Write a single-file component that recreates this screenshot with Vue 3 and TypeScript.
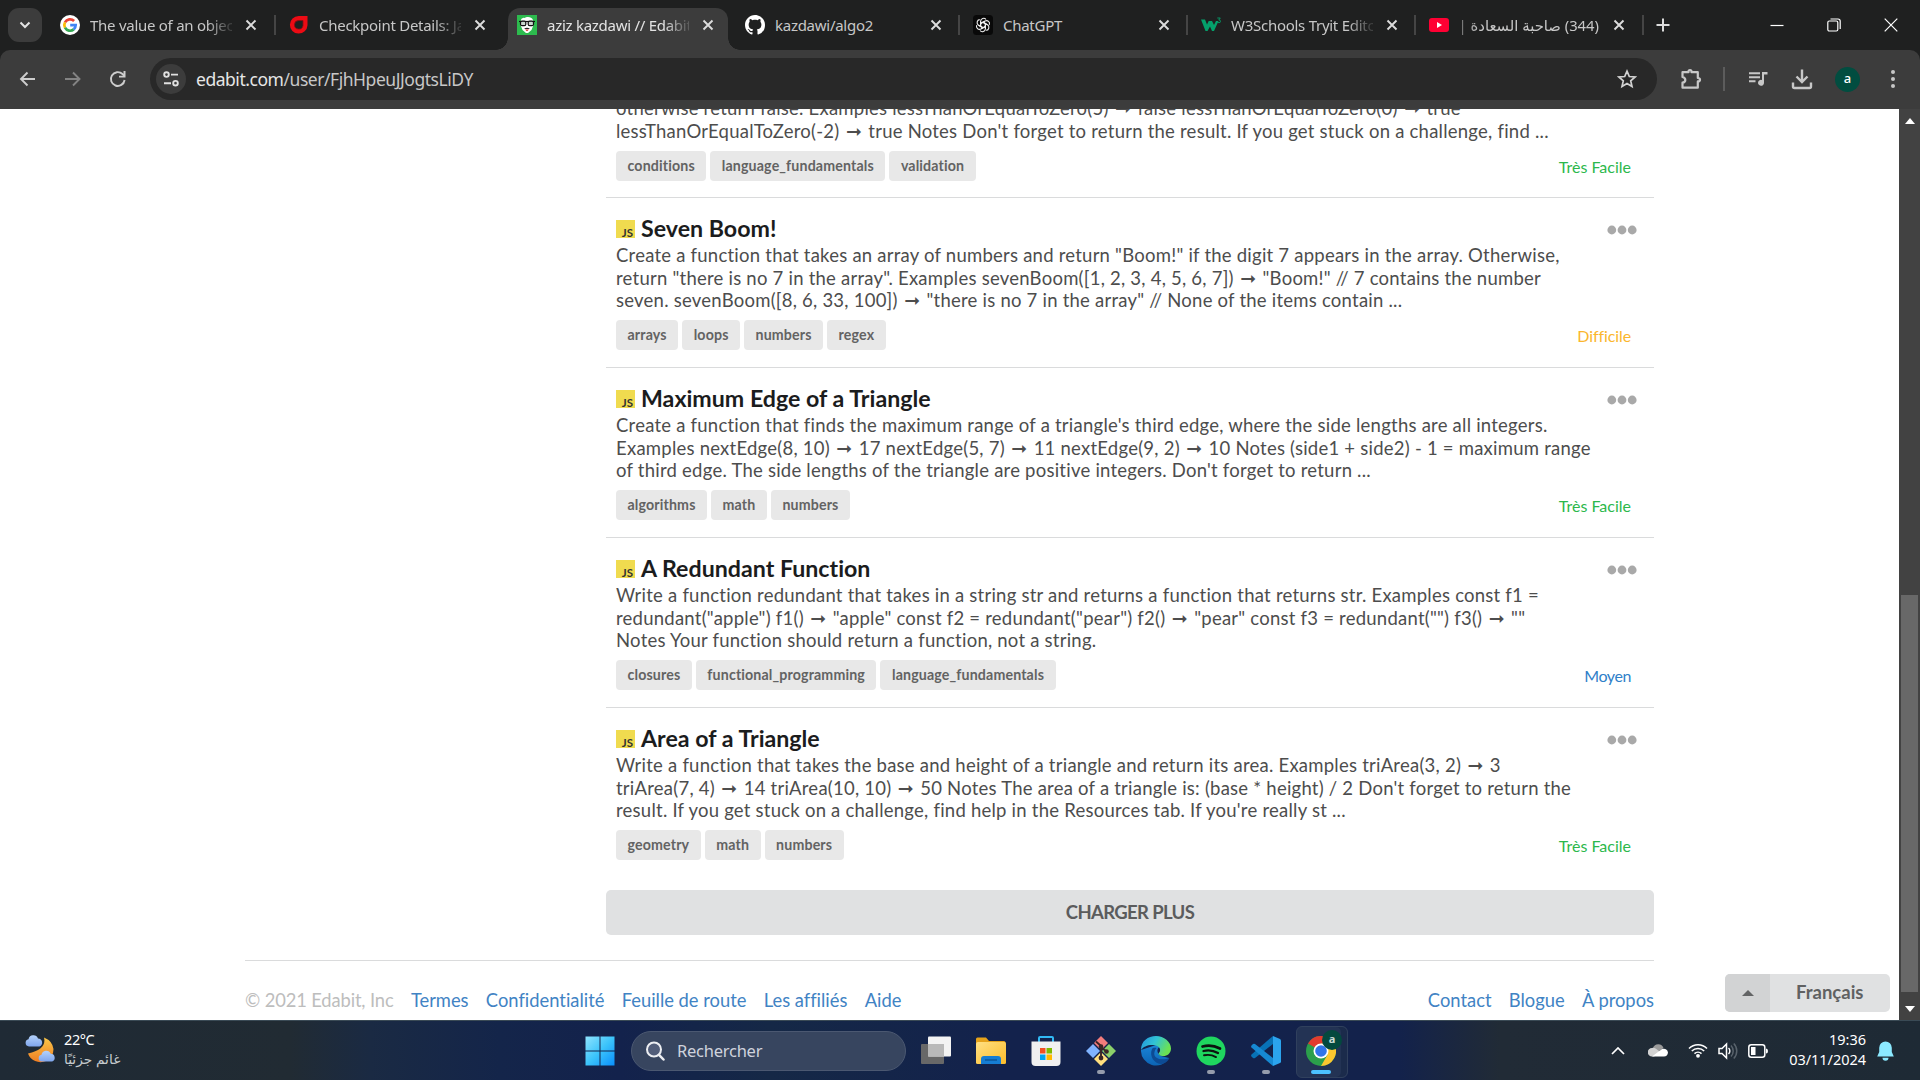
<script setup lang="ts">
interface Tab { icon: string; title: string; active?: boolean; sep?: boolean; fade?: boolean; rtl?: boolean }
interface Challenge { title?: string; lines: string[]; tags: string[]; level: string; tone: string }

const tabs: Tab[] = [
  { icon: 'google', title: 'The value of an objec', sep: true, fade: true },
  { icon: 'gomycode', title: 'Checkpoint Details: Ja', fade: true },
  { icon: 'edabit', title: 'aziz kazdawi // Edabit', active: true, fade: true },
  { icon: 'github', title: 'kazdawi/algo2', sep: true },
  { icon: 'gpt', title: 'ChatGPT', sep: true },
  { icon: 'w3', title: 'W3Schools Tryit Edito', sep: true, fade: true },
  { icon: 'youtube', title: '(344) صاحبة السعادة |', sep: true, rtl: true },
]

const challenges: Challenge[] = [
  {
    lines: [
      'otherwise return false. Examples lessThanOrEqualToZero(5) ➞ false lessThanOrEqualToZero(0) ➞ true',
      "lessThanOrEqualToZero(-2) ➞ true Notes Don't forget to return the result. If you get stuck on a challenge, find ...",
    ],
    tags: ['conditions', 'language_fundamentals', 'validation'], level: 'Très Facile', tone: 'easy',
  },
  {
    title: 'Seven Boom!',
    lines: [
      'Create a function that takes an array of numbers and return "Boom!" if the digit 7 appears in the array. Otherwise,',
      'return "there is no 7 in the array". Examples sevenBoom([1, 2, 3, 4, 5, 6, 7]) ➞ "Boom!" // 7 contains the number',
      'seven. sevenBoom([8, 6, 33, 100]) ➞ "there is no 7 in the array" // None of the items contain ...',
    ],
    tags: ['arrays', 'loops', 'numbers', 'regex'], level: 'Difficile', tone: 'hard',
  },
  {
    title: 'Maximum Edge of a Triangle',
    lines: [
      "Create a function that finds the maximum range of a triangle's third edge, where the side lengths are all integers.",
      'Examples nextEdge(8, 10) ➞ 17 nextEdge(5, 7) ➞ 11 nextEdge(9, 2) ➞ 10 Notes (side1 + side2) - 1 = maximum range',
      "of third edge. The side lengths of the triangle are positive integers. Don't forget to return ...",
    ],
    tags: ['algorithms', 'math', 'numbers'], level: 'Très Facile', tone: 'easy',
  },
  {
    title: 'A Redundant Function',
    lines: [
      'Write a function redundant that takes in a string str and returns a function that returns str. Examples const f1 =',
      'redundant("apple") f1() ➞ "apple" const f2 = redundant("pear") f2() ➞ "pear" const f3 = redundant("") f3() ➞ ""',
      'Notes Your function should return a function, not a string.',
    ],
    tags: ['closures', 'functional_programming', 'language_fundamentals'], level: 'Moyen', tone: 'medium',
  },
  {
    title: 'Area of a Triangle',
    lines: [
      'Write a function that takes the base and height of a triangle and return its area. Examples triArea(3, 2) ➞ 3',
      "triArea(7, 4) ➞ 14 triArea(10, 10) ➞ 50 Notes The area of a triangle is: (base * height) / 2 Don't forget to return the",
      "result. If you get stuck on a challenge, find help in the Resources tab. If you're really st ...",
    ],
    tags: ['geometry', 'math', 'numbers'], level: 'Très Facile', tone: 'easy',
  },
]

// Arrows are set a little larger than the prose around them.
const runs = (line: string) => line.split(/(➞)/).filter(Boolean)

const linksLeft = ['Termes', 'Confidentialité', 'Feuille de route', 'Les affiliés', 'Aide']
const linksRight = ['Contact', 'Blogue', 'À propos']
</script>

<template>
  <div class="screen">
    <header class="tabstrip">
      <div class="tab-search">
        <svg width="12" height="12" viewBox="0 0 12 12"><path d="M1.500 3.500 6 8l4.500-4.500" fill="none" stroke="#e3e3e3" stroke-width="2" /></svg>
      </div>
      <div v-for="t in tabs" :key="t.title" class="tab" :class="{ active: t.active, sep: t.sep }">
        <svg v-if="t.icon === 'google'" class="fav" viewBox="0 0 20 20">
          <circle cx="10" cy="10" r="10" fill="#fff" />
          <g fill="none" stroke-width="2.700">
            <path d="M14.100 6A5.700 5.700 0 0 0 5 7.300" stroke="#ea4335" />
            <path d="M5 7.300A5.700 5.700 0 0 0 5 12.700" stroke="#fbbc05" />
            <path d="M5 12.700A5.700 5.700 0 0 0 13.700 14.400" stroke="#34a853" />
            <path d="M13.700 14.400A5.700 5.700 0 0 0 15.700 10.100H10.200" stroke="#4285f4" />
          </g>
        </svg>
        <svg v-else-if="t.icon === 'gomycode'" class="fav" viewBox="0 0 20 20">
          <path d="M18.500 1v9.200a8.800 8.800 0 1 1-8.800-9.200Z" fill="#ec0b14" />
          <path d="M14 5.500v5a4.300 4.300 0 1 1-4.300-5Z" fill="#1f2020" stroke="#8f0a10" stroke-width=".8" />
        </svg>
        <svg v-else-if="t.icon === 'edabit'" class="fav" viewBox="0 0 20 20">
          <path fill="#2dbb4e" d="M0 0h20v20H0z" />
          <path d="M4 5c1-3 3-1.500 4.500-2.500 3-1 6-.5 7.500 2.500l.5 5-2 5-3.500 3h-2l-3.500-3L3.500 10Z" fill="#fff" />
          <path d="M2 6.500h16" stroke="#111" stroke-width="1.200" />
          <rect x="3.500" y="6.200" width="5.300" height="4.500" rx="1.500" fill="#c9d6cd" stroke="#111" stroke-width="1.200" />
          <rect x="11.200" y="6.200" width="5.300" height="4.500" rx="1.500" fill="#c9d6cd" stroke="#111" stroke-width="1.200" />
          <path d="M7 13.500q3-1.500 6 0-3 1-6 0" fill="#222" /><path d="M8 14.500h4l-2 1.800Z" fill="#d6252b" />
        </svg>
        <svg v-else-if="t.icon === 'github'" class="fav" viewBox="0 0 16 16">
          <path fill="#fff" d="M8 0C3.580 0 0 3.580 0 8c0 3.540 2.290 6.530 5.470 7.590.4.070.55-.17.55-.38 0-.19-.01-.82-.01-1.490-2.010.37-2.530-.49-2.690-.94-.09-.23-.48-.94-.82-1.130-.28-.15-.68-.52-.01-.53.63-.01 1.080.58 1.230.82.72 1.210 1.870.87 2.330.66.070-.52.28-.87.51-1.070-1.780-.2-3.640-.89-3.640-3.950 0-.87.31-1.590.82-2.150-.08-.2-.36-1.020.08-2.120 0 0 .67-.21 2.200.82.64-.18 1.320-.27 2-.27s1.360.09 2 .27c1.530-1.040 2.200-.82 2.200-.82.44 1.100.16 1.920.08 2.120.51.56.82 1.270.82 2.150 0 3.070-1.870 3.750-3.650 3.950.29.25.54.73.54 1.480 0 1.070-.01 1.930-.01 2.200 0 .21.15.46.55.38A8.010 8.010 0 0 0 16 8c0-4.420-3.580-8-8-8" />
        </svg>
        <svg v-else-if="t.icon === 'gpt'" class="fav" viewBox="0 0 20 20">
          <rect width="20" height="20" rx="3.500" fill="#090909" />
          <g fill="none" stroke="#f2f2f2" stroke-width="1.100">
            <path v-for="a in [0, 60, 120, 180, 240, 300]" :key="a" :transform="`rotate(${a} 10 10)`" d="M7.600 11.400V6.200a3 3 0 0 1 5.400-1.700M7.600 8.600 10 7.200l4.300 2.500" />
          </g>
        </svg>
        <svg v-else-if="t.icon === 'w3'" class="fav" viewBox="0 0 20 20">
          <path d="M0 4.500h4l2 5 1.700-3.500H11l2 4 2-4h2.500L13 16h-2L9 11.500 6.500 16h-2Z" fill="#04a06b" />
          <path d="M16.300 3h3l-1.500 1.900q1.700 0 1.700 1.400T18 7.700q-1.200 0-1.500-.9" fill="none" stroke="#04a06b" stroke-width=".9" />
        </svg>
        <svg v-else class="fav" viewBox="0 0 20 20">
          <rect y="3" width="20" height="14" rx="3" fill="#ff0033" /><path d="m8 7 5 3-5 3Z" fill="#fff" />
        </svg>
        <span class="tab-title" :class="{ fade: t.fade, rtl: t.rtl }">{{ t.title }}</span>
        <svg class="tab-close" width="12" height="12" viewBox="0 0 12 12"><path d="m1.500 1.500 9 9m0-9-9 9" stroke="#dcdcdc" stroke-width="1.900" /></svg>
      </div>
      <svg class="new-tab" width="14" height="14" viewBox="0 0 14 14"><path d="M7 .5v13M.5 7h13" stroke="#dcdcdc" stroke-width="2" /></svg>
      <div class="win">
        <svg width="14" height="14" viewBox="0 0 14 14"><path d="M.5 7.500h13" stroke="#fff" stroke-width="1.200" /></svg>
        <svg width="14" height="14" viewBox="0 0 14 14"><g fill="none" stroke="#fff" stroke-width="1.200"><rect x=".8" y="3" width="10" height="10" rx="1.500" /><path d="M3.500 1H11q2.200 0 2.200 2.200V11" /></g></svg>
        <svg width="14" height="14" viewBox="0 0 14 14"><path d="m.7.7 12.600 12.600m0-12.600L.7 13.300" stroke="#fff" stroke-width="1.200" /></svg>
      </div>
    </header>

    <div class="toolbar-wrap">
      <div class="toolbar">
        <svg class="nav" viewBox="0 0 20 20"><path d="M17 10H3M9.500 3.500 3 10l6.500 6.500" fill="none" stroke="#cdcdcd" stroke-width="1.900" /></svg>
        <svg class="nav" viewBox="0 0 20 20"><path d="M2 10h14.500M10 3.500l6.500 6.500-6.500 6.500" fill="none" stroke="#838383" stroke-width="1.900" /></svg>
        <svg class="nav" viewBox="0 0 20 20"><path d="M16.600 11A6.900 6.900 0 1 1 14.500 5l2 2" fill="none" stroke="#cdcdcd" stroke-width="1.900" /><path d="M17.500 2v6.500H11V6.700h4.500V2Z" fill="#cdcdcd" /></svg>
        <div class="omnibox">
          <div class="site">
            <svg width="18" height="18" viewBox="0 0 18 18"><g fill="none" stroke="#e0e0e0" stroke-width="1.900"><circle cx="4.500" cy="4.600" r="2.300" /><path d="M9 4.600h7M2 13.200h7" /><circle cx="13.500" cy="13.200" r="2.300" /></g></svg>
          </div>
          <span class="url"><b>edabit.com</b>/user/FjhHpeuJJogtsLiDY</span>
          <svg class="star" width="20" height="20" viewBox="0 0 20 20"><path d="m10 2.200 2.300 5.300 5.800.5-4.400 3.800 1.300 5.600-5-3-5 3 1.300-5.600L1.900 8l5.800-.5Z" fill="none" stroke="#d2d2d2" stroke-width="1.700" /></svg>
        </div>
        <div class="tools">
          <svg width="22" height="22" viewBox="0 0 22 22"><path d="M2.500 4.200H8.500V3.500q0-1.500 1.500-1.500t1.500 1.500V4.200h6.300V10q2.200 0 2.200 1.700t-2.200 1.700v6.300H2.500v-5q2.800-.5 2.800-2.800T2.500 9Z" fill="none" stroke="#c7c7c7" stroke-width="2.200" stroke-linejoin="round" /></svg>
          <i class="bar"></i>
          <svg width="20" height="20" viewBox="0 0 20 20"><path d="M1 4.300h11M1 8.300h11M1 12.300h6.500" stroke="#c7c7c7" stroke-width="2" /><path d="M14 3h5.500v2.500H16v8.200a3 3 0 1 1-2-2.700Z" fill="#c7c7c7" /></svg>
          <svg width="22" height="22" viewBox="0 0 22 22"><path d="M11 1.500v12M5.500 8.500 11 14l5.500-5.500M2 14.500v4q0 1.500 1.500 1.500h15q1.500 0 1.500-1.500v-4" fill="none" stroke="#c7c7c7" stroke-width="2.400" /></svg>
          <span class="avatar">a</span>
          <svg width="6" height="20" viewBox="0 0 6 20"><g fill="#c7c7c7"><circle cx="3" cy="3" r="2" /><circle cx="3" cy="10" r="2" /><circle cx="3" cy="17" r="2" /></g></svg>
        </div>
      </div>
    </div>

    <div class="viewport">
      <main class="page">
        <section class="list">
          <article v-for="(c, i) in challenges" :key="i" class="item" :class="{ partial: !c.title }">
            <div v-if="c.title" class="head">
              <span class="js"><span>JS</span></span>
              <h2>{{ c.title }}</h2>
              <svg class="more" width="30" height="10" viewBox="0 0 30 10"><g fill="#a9a9a9"><circle cx="4.800" cy="5" r="4.400" /><circle cx="15" cy="5" r="4.400" /><circle cx="25.200" cy="5" r="4.400" /></g></svg>
            </div>
            <p class="desc"><span v-for="l in c.lines" :key="l" class="line"><template v-for="(r, k) in runs(l)" :key="k"><span v-if="r === '➞'" class="arrow">{{ r }}</span><template v-else>{{ r }}</template></template></span></p>
            <div class="foot">
              <span v-for="tag in c.tags" :key="tag" class="tag">{{ tag }}</span>
              <span class="level" :class="c.tone">{{ c.level }}</span>
            </div>
          </article>
          <button class="load">CHARGER PLUS</button>
        </section>
        <footer class="footer">
          <span class="copy">© 2021 Edabit, Inc</span>
          <a v-for="l in linksLeft" :key="l">{{ l }}</a>
          <nav><a v-for="l in linksRight" :key="l">{{ l }}</a></nav>
        </footer>
      </main>
      <div class="lang">
        <span class="up"><svg width="12" height="6" viewBox="0 0 12 6"><path d="M0 6 6 0l6 6Z" fill="#636465" /></svg></span>
        <span class="name">Français</span>
      </div>
      <aside class="scroll">
        <svg width="10" height="6" viewBox="0 0 10 6"><path d="m0 6 5-6 5 6Z" fill="#fff" /></svg>
        <div class="thumb"></div>
        <svg width="10" height="6" viewBox="0 0 10 6"><path d="m0 0 5 6 5-6Z" fill="#fff" /></svg>
      </aside>
    </div>

    <div class="taskbar">
      <div class="weather">
        <svg width="32" height="30" viewBox="0 0 32 30">
          <defs>
            <linearGradient id="moon" x2="0" y2="1"><stop stop-color="#fbc84a" /><stop offset="1" stop-color="#ee7d22" /></linearGradient>
            <linearGradient id="cloud" x2="0" y2="1"><stop stop-color="#b4d2fb" /><stop offset="1" stop-color="#7fa5ec" /></linearGradient>
          </defs>
          <path d="M19 3.500q3 12-16 16a13 12 0 0 0 18 7.500q7.500-4 7.500-12-1-8-9.500-11.500" fill="url(#moon)" />
          <path d="M4 12.500a3.700 3.700 0 0 1-.5-7.300 5 5 0 0 1 9.500-.8 4.200 4.200 0 0 1 1.500 8.100Z" fill="url(#cloud)" />
          <path d="M16.500 27.500a3.400 3.400 0 0 1 0-6.700 4.800 4.800 0 0 1 9.200-1 4 4 0 0 1 1.500 7.700Z" fill="url(#cloud)" />
        </svg>
        <div><span>22°C</span><span class="ar">غائم جزئيًا</span></div>
      </div>

      <div class="apps">
        <svg class="app start" viewBox="0 0 30 30">
          <defs><linearGradient id="win" x2="1" y2="1"><stop stop-color="#8fe3fd" /><stop offset=".5" stop-color="#3cc4fb" /><stop offset="1" stop-color="#0a8ffb" /></linearGradient></defs>
          <path d="M.5.500h14v14H.5zM15.500.500h14v14h-14zM.5 15.500h14v14H.5zM15.500 15.500h14v14h-14z" fill="url(#win)" />
        </svg>
        <div class="search">
          <svg width="20" height="20" viewBox="0 0 20 20"><circle cx="9" cy="8.500" r="7" fill="#6e7896" fill-opacity=".5" stroke="#eceef2" stroke-width="2" /><path d="m14 13.800 4.500 4.700" stroke="#eceef2" stroke-width="2.500" stroke-linecap="round" /></svg>
          <span>Rechercher</span>
        </div>
        <svg class="app" viewBox="0 0 30 30"><rect y="8" width="23" height="20" rx="1" fill="#686868" /><rect x="7" y=".5" width="23" height="20" rx="1" fill="#f3f3f3" /><path d="M7 8h16v12.500H7z" fill="#b9b9b9" /></svg>
        <svg class="app" viewBox="0 0 30 30">
          <defs><linearGradient id="fold" x2="1" y2="1"><stop stop-color="#ffe083" /><stop offset="1" stop-color="#fdbd2a" /></linearGradient></defs>
          <path d="M0 3q0-1.500 1.500-1.500H10L13 5h15q1.500 0 1.500 1.500V12H0Z" fill="#e6a31a" /><path d="M0 8q0-2 2-2h26.500Q30 6 30 7.500v19q0 1.500-1.500 1.500h-27Q0 28 0 26.500Z" fill="url(#fold)" />
          <path d="M5 28v-5q0-3 3-3h14q3 0 3 3v5Z" fill="#167dd3" /><path d="M9 24h12" stroke="#0b4d8c" stroke-width="1.200" />
        </svg>
        <svg class="app" viewBox="0 0 30 30">
          <path d="M8 6V2q0-1 1-1h12q1 0 1 1v4" fill="none" stroke="#31b9f4" stroke-width="2" />
          <path d="M.5 5.500h29V26q0 4-4 4h-21Q.5 30 .5 26Z" fill="#f0f0f0" />
          <path fill="#f25022" d="M9 12h5.500v5.500H9z" /><path fill="#7fba00" d="M15.500 12H21v5.500h-5.500z" /><path fill="#00a4ef" d="M9 18.500h5.500V24H9z" /><path fill="#ffb900" d="M15.500 18.500H21V24h-5.500z" />
        </svg>
        <div class="running">
          <svg class="app" viewBox="0 0 30 30">
            <path d="M15 0 22 7 17 12H13L8 7Z" fill="#f37c7c" /><path d="M7 8 14 15 7 22 0 15Z" fill="#80b3ff" /><path d="M23 8 30 15 23 22 16 15Z" fill="#8bd06a" /><path d="M15 30 22 23 16 17h-2L8 23Z" fill="#ffdf7e" />
            <path d="M10 5.500 15 10v13M15 11l6 5" fill="none" stroke="#3d2626" stroke-width="1.900" /><circle cx="15" cy="10.500" r="2.300" fill="#3d2626" /><circle cx="20.500" cy="15.500" r="2.300" fill="#3d2626" /><circle cx="15" cy="22" r="2.400" fill="#3d2626" />
          </svg><i></i>
        </div>
        <svg class="app" viewBox="0 0 30 30">
          <defs>
            <linearGradient id="e1" x2="1" y2=".4"><stop stop-color="#2390dc" /><stop offset=".5" stop-color="#31c3d5" /><stop offset="1" stop-color="#6be253" /></linearGradient>
            <linearGradient id="e2" x2="0" y2="1"><stop stop-color="#1b86d8" /><stop offset="1" stop-color="#0c64b5" /></linearGradient>
          </defs>
          <path d="M0 14a15 15 0 0 0 28 8l-8-2-2-12Z" fill="url(#e2)" />
          <path d="M0 14C0 5 7 0 15 0s15 6 15 12.500c0 5-4 7.500-7.500 7.500-4 0-6-1.500-4.500-3.500 3-4-1-8-7-7.500C6 9 2 11 0 14" fill="url(#e1)" />
          <path d="M11 13c-3 7 2 15 10 15 4-1 6.500-4 7.500-6-7 3-17 1-15-6 .5-2 1-3 2-4-2-.5-4 0-4.500 1" fill="#0d4b94" /><path d="M17.600 11.500c-2.200 2.500-1.300 6.500 2.600 8.200-4-1.500-2-3-1.300-4.500.6-1.500 0-2.800-1.300-3.700" fill="#16224b" />
        </svg>
        <div class="running">
          <svg class="app" viewBox="0 0 30 30"><circle cx="15" cy="15" r="14.500" fill="#1fd65f" /><g fill="none" stroke="#0c130f" stroke-linecap="round"><path d="M6.500 10.500q9-2.500 17.500 2" stroke-width="2.700" /><path d="M7.500 15q7.500-2 14.500 2" stroke-width="2.300" /><path d="M8 19.300q6.500-1.500 12 1.800" stroke-width="1.900" /></g></svg><i></i>
        </div>
        <div class="running">
          <svg class="app" viewBox="0 0 30 30"><path d="M22 0v8L4 22q-1 .5-2 0l-1.500-1.500q-.8-1 0-2Z" fill="#0872b6" /><path d="M22 30v-8L4 8q-1-.5-2 0L.5 9.500q-.8 1 0 2Z" fill="#1689d2" /><path d="m22 0 7 3q1 .5 1 1.500v21q0 1-1 1.500l-7 3Z" fill="#2ba4ee" /></svg><i></i>
        </div>
        <div class="running current">
          <svg class="app" viewBox="0 0 30 30"><circle cx="15" cy="15" r="15" fill="#2b9f4b" /><path d="M15 15 2 7.500A15 15 0 0 1 28 7.500H15Z" fill="#e33b2e" /><path d="M28 7.500A15 15 0 0 1 15 30l6.500-11.200L15 7.500Z" fill="#fcc62f" /><circle cx="15" cy="15" r="7.500" fill="#fff" /><circle cx="15" cy="15" r="5.800" fill="#3175ea" /></svg>
          <b class="badge">a</b><i></i>
        </div>
      </div>

      <div class="tray">
        <svg width="14" height="8" viewBox="0 0 14 8"><path d="m1 7 6-6 6 6" fill="none" stroke="#fff" stroke-width="1.700" /></svg>
        <svg class="cloud" width="20" height="14" viewBox="0 0 20 14"><path d="M5 5a5.500 5.500 0 0 1 10.500 0L10 9Z" fill="#9b9b9b" /><path d="M4 13.500A4.200 4.200 0 0 1 4 5q2-.5 4 .8l5 4-7 3.700Z" fill="#d2d2d2" /><path d="M4 13.500 14 6q5-1 6 3.500-.5 4-4 4Z" fill="#fff" /></svg>
        <svg class="wifi" width="20" height="16" viewBox="0 0 20 16"><g fill="none" stroke="#fff" stroke-width="1.500"><path d="M1 6.500a12.500 12.500 0 0 1 18 0M3.800 9a8.700 8.700 0 0 1 12.400 0M6.500 11.600a5 5 0 0 1 7 0" /></g><circle cx="10" cy="13.800" r="1.900" fill="#fff" /></svg>
        <svg class="sound" width="20" height="18" viewBox="0 0 20 18"><path d="M1 6.500h3L8.500 2v14L4 11.500H1Z" fill="none" stroke="#fff" stroke-width="1.500" /><path d="M10.500 6a4 4 0 0 1 0 6" fill="none" stroke="#fff" stroke-width="1.400" /><path d="M13 3.500a8 8 0 0 1 0 11M15.800 1.500a11 11 0 0 1 0 15" fill="none" stroke="#59636c" stroke-width="1.500" /></svg>
        <svg class="battery" width="20" height="14" viewBox="0 0 20 14"><rect x=".8" y=".8" width="16" height="12.400" rx="2.500" fill="none" stroke="#fff" stroke-width="1.500" /><path d="M3 3h4.500v8H3z" fill="#fff" /><path d="M18 4.500q2 0 2 2.500t-2 2.500Z" fill="#fff" /></svg>
        <div class="clock"><span>19:36</span><span>03/11/2024</span></div>
        <svg class="bell" width="17" height="20" viewBox="0 0 17 20"><path d="M8.500.5a6.300 6.300 0 0 1 6.300 6.300V11l2 4.500H.2l2-4.500V6.800A6.300 6.300 0 0 1 8.500.5M5.500 16.700h6a3 3 0 0 1-6 0" fill="#8be9ff" /></svg>
      </div>
    </div>
  </div>
</template>

<style>
body { margin: 0; overflow: hidden; }
</style>

<style scoped>
* { box-sizing: border-box; }
svg { display: block; flex: none; }
.screen { width: 1920px; height: 1080px; display: flex; flex-direction: column; overflow: hidden; background: #fff; font-family: "Lato", sans-serif; font-variant-ligatures: none; }

.tabstrip { height: 50px; flex: none; background: #1f2020; display: flex; align-items: center; padding-left: 8px; font-family: "Noto Sans", "DejaVu Sans", sans-serif; }
.tab-search { width: 34px; height: 34px; border-radius: 11px; background: #3c3c3c; display: grid; place-items: center; margin-right: 6px; }
.tab { position: relative; width: 228px; height: 50px; display: flex; align-items: center; padding-left: 12px; flex: none; }
.tab:nth-child(n + 3) { padding-left: 13px; }
.fav { width: 20px; height: 20px; margin-right: 10px; }
.tab-title { width: 142px; flex: none; white-space: nowrap; color: #c7c7c7; font-size: 15px; letter-spacing: -0.27px; line-height: 24px; }
.fade { -webkit-mask-image: linear-gradient(90deg, #000 82%, #0003 98%); mask-image: linear-gradient(90deg, #000 82%, #0003 98%); }
.rtl { direction: rtl; text-align: right; font-size: 14.800px; letter-spacing: 0; width: 140px; margin-right: 1px; -webkit-mask-image: linear-gradient(270deg, #000 85%, #0007); mask-image: linear-gradient(270deg, #000 85%, #0007); }
.tab-close { margin-left: 13px; }
.tab.sep::after { content: ""; position: absolute; right: 0; top: 15px; width: 2px; height: 20px; background: #454545; }
.active::before { content: ""; position: absolute; left: 4px; right: 4px; top: 8px; bottom: 0; background: #3c3c3c; border-radius: 12px 12px 0 0; }
.active::after { content: ""; position: absolute; left: -8px; right: -8px; bottom: 0; height: 12px; background: radial-gradient(circle at 0 0, transparent 11.500px, #3c3c3c 12px) 0 0 / 12px 12px no-repeat, radial-gradient(circle at 100% 0, transparent 11.500px, #3c3c3c 12px) 100% 0 / 12px 12px no-repeat; }
.active > * { position: relative; }
.active .tab-title { color: #e3e3e3; }
.new-tab { margin-left: 12px; }
.win { margin-left: auto; display: flex; gap: 43px; padding-right: 22px; }

.toolbar-wrap { height: 59px; flex: none; background: #1f2020; }
.toolbar { height: 59px; background: #3c3c3c; border-radius: 10px 10px 0 0; display: flex; align-items: center; padding: 0 25px 1px 18px; }
.nav { width: 20px; height: 20px; margin-right: 25px; }
.omnibox { width: 1507px; height: 42px; flex: none; margin-left: -3px; border-radius: 21px; background: #282828; display: flex; align-items: center; padding-left: 6px; }
.site { width: 30px; height: 30px; border-radius: 50%; background: #3c3c3c; display: grid; place-items: center; }
.url { margin-left: 10px; font: 17.500px "Noto Sans", sans-serif; letter-spacing: -0.46px; color: #c7c7c7; }
.url b { font-weight: 400; color: #e6e6e6; }
.star { margin-left: auto; margin-right: 20px; }
.tools { display: flex; align-items: center; flex: 1; padding-left: 23px; }
.bar { width: 2px; height: 24px; background: #5c5c5c; margin: 0 23px 0 21px; }
.tools svg + svg { margin-left: 23px; }
.avatar { width: 25px; height: 25px; border-radius: 50%; background: #014d40; color: #fff; display: grid; place-items: center; font: 500 13px/20px "Noto Sans", sans-serif; margin: 0 30px 0 22px; padding-bottom: 3px; }

.viewport { position: relative; height: 911px; flex: none; display: flex; overflow: hidden; }
.page { flex: 1; padding: 0 245px; }
.list { margin: -12px 0 0 361px; width: 1048px; }
.item { height: 170px; padding: 15px 10px 0; border-bottom: 1px solid #dadbdc; }
.item:nth-last-child(2) { border-bottom-color: transparent; }
.item.partial { height: 101px; padding-top: 0; }
.head { display: flex; align-items: center; height: 31px; }
.js { width: 19px; height: 18px; background: #f0db4f; color: #323330; font: 700 11.500px/11px "Lato", sans-serif; display: flex; align-items: flex-end; justify-content: flex-end; padding-right: 2px; margin: 1px 6px 0 0; }
h2 { margin: 0; font-size: 23.200px; line-height: 29px; font-weight: 700; color: #1b1c1d; }
.more { margin: 2px 7px 0 auto; }
.desc { margin: 0 0 8.500px; font-family: "Lato", "DejaVu Sans", sans-serif; font-size: 18.500px; line-height: 22.500px; letter-spacing: 0.24px; word-spacing: -0.05px; color: #4d4d4d; }
.line { display: block; white-space: nowrap; height: 22.500px; }
.arrow { font-size: 19px; line-height: 0; letter-spacing: 0; padding: 0 1.500px; }
.foot { display: flex; align-items: flex-start; gap: 4px; }
.tag { height: 30px; padding: 0 11.500px; border-radius: 4px; background: #e8e8e8; color: #636363; font-weight: 700; font-size: 14.200px; letter-spacing: .15px; line-height: 30px; }
.level { margin-left: auto; margin-right: 13px; font-size: 16px; line-height: 31px; }
.easy { color: #2cb84c; }
.hard { color: #fbb62d; letter-spacing: -.1px; }
.medium { color: #2f80c9; letter-spacing: -.4px; }
.load { display: block; width: 1048px; height: 45px; margin-top: 12px; border: 0; border-radius: 5px; background: #e0e1e2; color: #5b5c5d; font: 700 18.500px "Lato", sans-serif; letter-spacing: -.65px; padding: 0 0 2px; }
.footer { margin-top: 25px; border-top: 1px solid #dadbdc; width: 1409px; height: 80px; display: flex; gap: 17.300px; font-size: 18.350px; line-height: 78px; }
.footer nav { margin-left: auto; display: flex; gap: 17.300px; }
.footer a { color: #4183c4; }
.copy { color: #bdbdbd; letter-spacing: -.13px; }
.lang { position: absolute; right: 30px; top: 865px; width: 165px; height: 38px; border-radius: 5px; background: #e0e1e2; display: flex; overflow: hidden; }
.up { width: 45px; background: #d2d3d4; display: grid; place-items: center; }
.name { flex: 1; padding-left: 26px; font-weight: 700; font-size: 18.500px; line-height: 36px; color: #606162; }
.scroll { width: 21px; flex: none; background: #424242; display: flex; flex-direction: column; align-items: center; padding: 9px 0 8px; }
.thumb { width: 17px; height: 397px; margin-top: auto; margin-bottom: 14px; background: #686868; }

.taskbar { position: relative; height: 60px; flex: none; border-top: 1px solid #3a4a55; color: #fff; display: flex; align-items: center; background: linear-gradient(90deg, #1f2a35 0, #212b33 290px, #1a2a43 370px, #14254a 500px, #13224c 620px, #152846 770px, #13224c 1000px, #13224b 1400px, #212b36 1500px, #1e2a35 1920px); font-family: "Noto Sans", "DejaVu Sans", sans-serif; }
.weather { display: flex; width: 585px; padding-left: 25px; gap: 7px; font-size: 14.500px; line-height: 20px; align-items: center; letter-spacing: -.4px; }
.weather svg { margin-bottom: 3px; }
.weather div { display: flex; flex-direction: column; padding-bottom: 3px; }
.ar { color: #c6cbce; font-size: 13.800px; letter-spacing: 0; }
.apps { display: flex; align-items: center; gap: 25px; }
.app { width: 30px; height: 30px; }
.start { margin-right: -9px; }
.search { width: 275px; height: 40px; border-radius: 20px; background: #37455f; border: 1px solid #4b5871; margin-right: -10px; display: flex; align-items: center; padding-left: 13px; gap: 12px; font-size: 16.500px; letter-spacing: -.25px; color: #cfd3dd; }
.running { position: relative; }
.running i { position: absolute; left: 11px; top: 34px; width: 8px; height: 4px; border-radius: 2px; background: #959cac; }
.current::before { content: ""; position: absolute; left: -10px; top: -10px; width: 50px; height: 50px; border-radius: 6px; background: #233354; border: 1px solid #30405d; box-shadow: inset -6px 0 #1b2b4b; }
.current .app { position: relative; }
.current i { left: 5px; width: 20px; background: #4cc2ff; }
.badge { position: absolute; left: 16px; top: -6px; width: 20px; height: 20px; border-radius: 50%; background: #03493e; color: #c9dad5; font: 700 11px/18px "Noto Sans", sans-serif; text-align: center; }
.tray { margin-left: auto; display: flex; align-items: center; padding-right: 26px; }
.cloud { margin: 0 0 2px 23px; }
.wifi { margin: 0 0 2px 20px; }
.sound { margin-left: 10px; }
.battery { margin-left: 10px; }
.clock { width: 98px; display: flex; flex-direction: column; text-align: right; font-size: 14.500px; line-height: 20px; letter-spacing: -.03px; padding-bottom: 3px; }
.bell { margin-left: 11px; }
</style>
